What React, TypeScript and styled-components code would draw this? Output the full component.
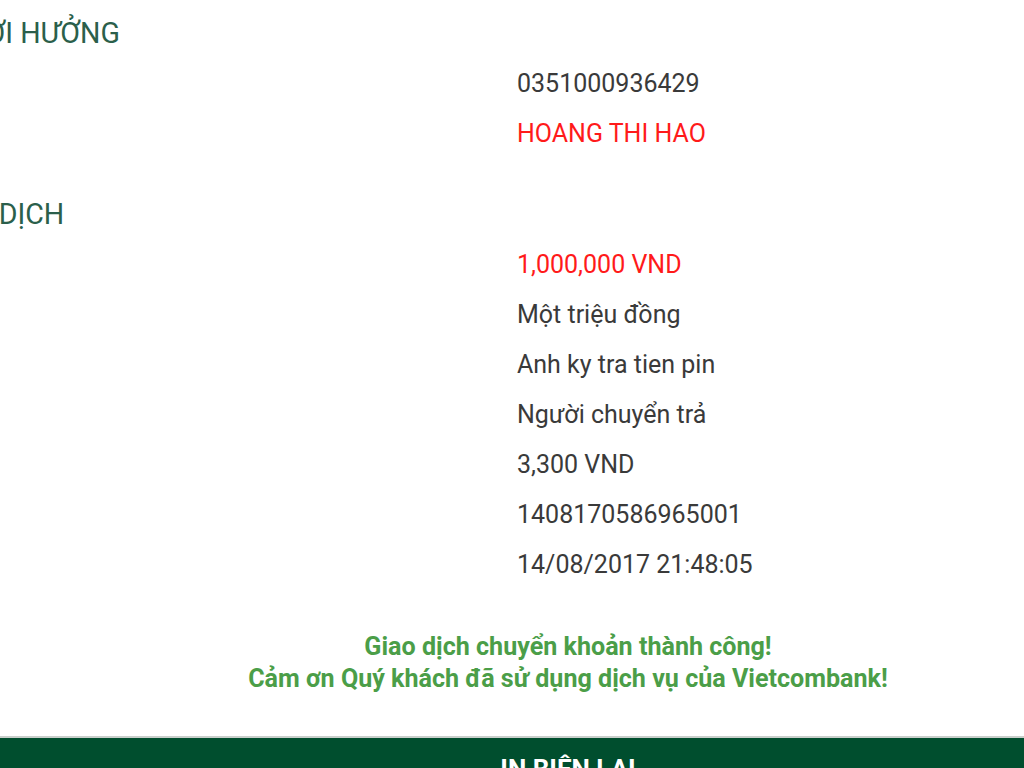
import React from "react";
import styled, { createGlobalStyle } from "styled-components";

const Global = createGlobalStyle`
  html, body { margin: 0; padding: 0; background: #ffffff; }
  body { overflow: hidden; font-family: Roboto, "Noto Sans", "Liberation Sans", sans-serif; }
`;

const Viewport = styled.div`
  width: 100vw;
  height: 100vh;
  overflow: hidden;
`;

const Sheet = styled.div`
  width: 1596px;
  margin-left: -230px;
  padding-top: 7px;
  display: flex;
  flex-direction: column;
`;

const Section = styled.section<{ $gap?: number }>`
  display: flex;
  flex-direction: column;
  margin-top: ${(p) => p.$gap ?? 0}px;
`;

const Heading = styled.h2`
  margin: 0;
  height: 51px;
  display: flex;
  align-items: center;
  font-size: 28.6px;
  font-weight: 400;
  color: #2b5f4b;
  text-transform: uppercase;
`;

const Row = styled.div<{ $accent?: boolean }>`
  height: 50px;
  display: flex;
  align-items: center;
  padding-left: 747px;
  font-size: 25px;
  color: ${(p) => (p.$accent ? "#ff1a1a" : "#3a3a3a")};
`;

const Message = styled.div`
  margin-top: 42px;
  text-align: center;
  font-size: 25.1px;
  font-weight: 700;
  line-height: 32px;
  color: #4b9e48;
`;

const PrintBar = styled.button`
  margin-top: 41px;
  border: none;
  border-top: 2px solid #c9cfcb;
  background: #004e2e;
  color: #ffffff;
  font-family: Roboto, "Liberation Sans", sans-serif;
  font-size: 26px;
  font-weight: 700;
  padding: 16px 0 20px;
  text-align: center;
  cursor: pointer;
`;

type Item = { value: string; accent?: boolean };

const beneficiary: Item[] = [
  { value: "0351000936429" },
  { value: "HOANG THI HAO", accent: true },
];

const transaction: Item[] = [
  { value: "1,000,000 VND", accent: true },
  { value: "Một triệu đồng" },
  { value: "Anh ky tra tien pin" },
  { value: "Người chuyển trả" },
  { value: "3,300 VND" },
  { value: "1408170586965001" },
  { value: "14/08/2017 21:48:05" },
];

export default function App() {
  return (
    <Viewport>
      <Global />
      <Sheet>
        <Section>
          <Heading>Thông tin người hưởng</Heading>
          {beneficiary.map((it) => (
            <Row key={it.value} $accent={it.accent}>{it.value}</Row>
          ))}
        </Section>
        <Section $gap={30}>
          <Heading>Thông tin giao dịch</Heading>
          {transaction.map((it) => (
            <Row key={it.value} $accent={it.accent}>{it.value}</Row>
          ))}
        </Section>
        <Message>
          Giao dịch chuyển khoản thành công!
          <br />
          Cảm ơn Quý khách đã sử dụng dịch vụ của Vietcombank!
        </Message>
        <PrintBar>IN BIÊN LAI</PrintBar>
      </Sheet>
    </Viewport>
  );
}
